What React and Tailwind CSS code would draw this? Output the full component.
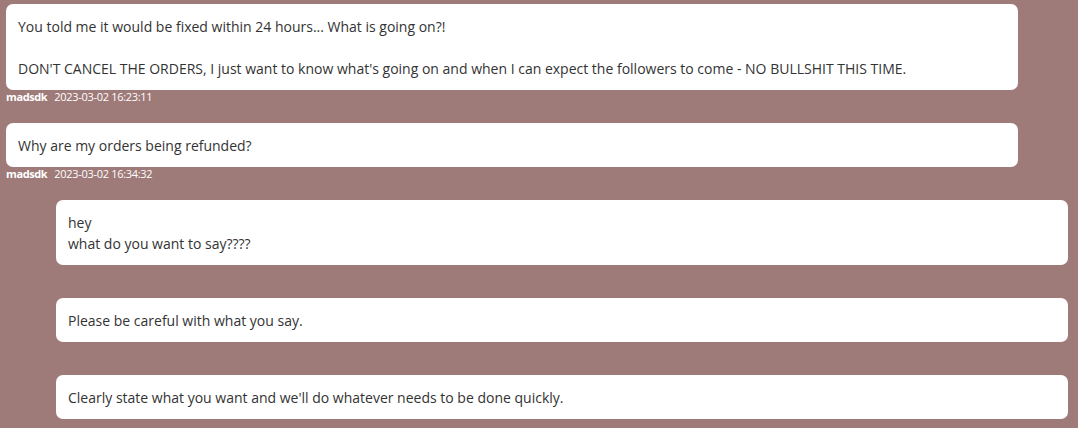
const messages = [
  {
    id: 1,
    mine: false,
    lines: [
      'You told me it would be fixed within 24 hours... What is going on?!',
      '',
      "DON'T CANCEL THE ORDERS, I just want to know what's going on and when I can expect the followers to come - NO BULLSHIT THIS TIME.",
    ],
    user: 'madsdk',
    time: '2023-03-02 16:23:11',
  },
  {
    id: 2,
    mine: false,
    lines: ['Why are my orders being refunded?'],
    user: 'madsdk',
    time: '2023-03-02 16:34:32',
  },
  { id: 3, mine: true, lines: ['hey', 'what do you want to say????'] },
  { id: 4, mine: true, lines: ['Please be careful with what you say.'] },
  { id: 5, mine: true, lines: ["Clearly state what you want and we'll do whatever needs to be done quickly."] },
];

function Message({ m }) {
  return (
    <div className={`mb-[19px] ${m.mine ? 'ml-[50px]' : ''}`}>
      <div className="w-[1012px] rounded-[7px] bg-white pl-[12px] pr-3 pt-[12px] pb-[11px] text-[14px] leading-[21px] text-[#333]">
        {m.lines.map((l, i) => (
          <div key={i}>{l || '\u00a0'}</div>
        ))}
      </div>
      <div className="flex h-[14px] items-center gap-[7px] text-[11px] leading-[14px] text-white">
        {m.user && <span className="font-bold tracking-[-0.4px]">{m.user}</span>}
        {m.time && <span className="font-medium tracking-[-0.3px]">{m.time}</span>}
      </div>
    </div>
  );
}

export default function App() {
  return (
    <div className="min-h-screen bg-[#9e7a78] pl-[6px] pt-[4px] font-['Open_Sans',sans-serif]">
      {messages.map((m) => (
        <Message key={m.id} m={m} />
      ))}
    </div>
  );
}
